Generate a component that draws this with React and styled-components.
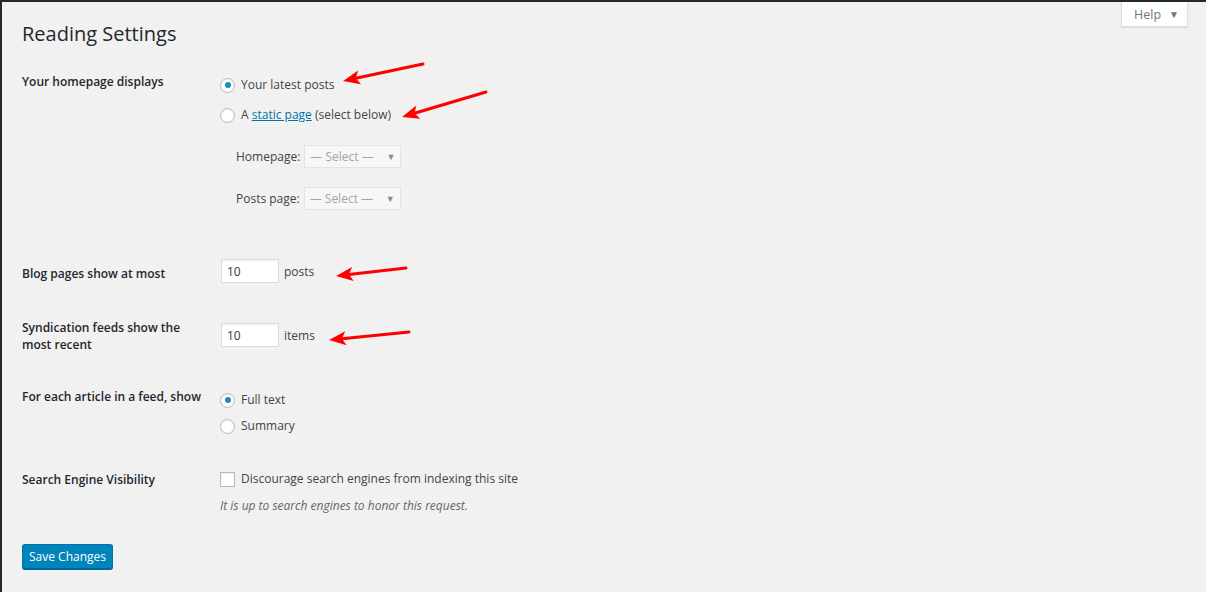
import React from "react";
import styled, { createGlobalStyle } from "styled-components";

const GlobalStyle = createGlobalStyle`
  html, body { margin: 0; padding: 0; background: #f1f1f1; }
  body {
    font-family: "Open Sans", "Noto Sans", sans-serif;
    color: #444;
    font-size: 12px;
  }
  * { box-sizing: border-box; }
`;

const Frame = styled.div`
  position: relative;
  min-height: 592px;
  background: #f1f1f1;
  border-top: 2px solid #23282d;
  border-left: 2px solid #23282d;
  padding: 0 18px 0 20px;
  overflow: hidden;
`;

const MenuMark = styled.span`
  position: absolute;
  left: -2px;
  top: ${(p) => p.$top}px;
  width: 2px;
  height: ${(p) => p.$h}px;
  background: #0073aa;
`;

const HelpTab = styled.button`
  float: right;
  width: 67px;
  height: 25px;
  margin: 0;
  padding: 0 0 0 4px;
  background: #fff;
  border: 1px solid #ddd;
  border-top: none;
  box-shadow: 0 1px 1px rgba(0, 0, 0, 0.08);
  font-family: inherit;
  font-size: 12.5px;
  color: #72777c;
  display: flex;
  align-items: center;
  justify-content: center;
  gap: 8px;
`;

const Caret = styled.span`
  font-size: 10px;
  color: #72777c;
  margin-top: -1px;
`;

const Title = styled.h1`
  margin: 0;
  padding-top: 17px;
  font-size: 20px;
  line-height: 29px;
  font-weight: 400;
  color: #23282d;
`;

const Row = styled.div`
  display: flex;
  margin-top: ${(p) => p.$mt}px;
`;

const Th = styled.div`
  flex: none;
  width: 198px;
  padding-top: ${(p) => p.$pt || 0}px;
  padding-right: 10px;
  font-size: 12px;
  line-height: 17px;
  font-weight: 600;
  color: #23282d;
`;

const Td = styled.div`
  flex: 1;
  padding-top: ${(p) => p.$pt || 0}px;
  display: flex;
  flex-direction: column;
`;

const ChoiceLine = styled.label`
  display: flex;
  align-items: center;
  gap: 6px;
  height: 20px;
  line-height: 20px;
  font-size: 12px;
  color: #444;
  margin-top: ${(p) => p.$mt || 0}px;
`;

const Radio = styled.span`
  flex: none;
  width: 15px;
  height: 15px;
  border-radius: 50%;
  border: 1px solid #b4b9be;
  background: #fff;
  box-shadow: inset 0 1px 2px rgba(0, 0, 0, 0.07);
  display: flex;
  align-items: center;
  justify-content: center;
  &::after {
    content: "";
    width: 6px;
    height: 6px;
    border-radius: 50%;
    background: #1e8cbe;
    display: ${(p) => (p.$checked ? "block" : "none")};
  }
`;

const Checkbox = styled.span`
  flex: none;
  width: 15px;
  height: 15px;
  border: 1px solid #b4b9be;
  background: #fff;
  box-shadow: inset 0 1px 2px rgba(0, 0, 0, 0.07);
`;

const Link = styled.a`
  color: #0073aa;
  text-decoration: underline;
`;

const SubField = styled.div`
  display: flex;
  align-items: center;
  gap: 4px;
  height: 23px;
  padding-left: 16px;
  margin-top: ${(p) => p.$mt}px;
  font-size: 12px;
  color: #444;
`;

const FakeSelect = styled.div`
  width: 97px;
  height: 23px;
  border: 1px solid #e2e4e7;
  background: #f7f7f7;
  color: #a0a5aa;
  font-size: 12px;
  display: flex;
  align-items: center;
  justify-content: space-between;
  padding: 0 5px 0 5px;
`;

const SelectCaret = styled.span`
  font-size: 9px;
  color: #8a8a8a;
`;

const InputLine = styled.div`
  display: flex;
  align-items: center;
  gap: 5px;
  font-size: 12px;
  color: #444;
`;

const NumberBox = styled.div`
  width: 58px;
  height: 24px;
  margin-left: 1px;
  border: 1px solid #ddd;
  background: #fff;
  box-shadow: inset 0 1px 2px rgba(0, 0, 0, 0.07);
  padding-left: 5px;
  display: flex;
  align-items: center;
  font-size: 12px;
  color: #32373c;
`;

const Description = styled.p`
  margin: 7px 0 0;
  line-height: 20px;
  font-size: 12px;
  font-style: italic;
  color: #666;
`;

const SaveButton = styled.button`
  display: block;
  margin-top: 28px;
  height: 25px;
  padding: 0 6px;
  white-space: nowrap;
  font-family: inherit;
  font-size: 12px;
  color: #fff;
  background: #0085ba;
  border: 1px solid #0073aa;
  border-bottom-color: #006799;
  border-radius: 3px;
  box-shadow: 0 1px 0 #006799;
`;

const ArrowLayer = styled.svg`
  position: absolute;
  left: -2px;
  top: -2px;
  pointer-events: none;
`;

const arrows = [
  [423, 64, 343, 81],
  [486, 92, 402, 117],
  [406, 268, 336, 276],
  [409, 332, 329, 340],
];

function Arrow({ x1, y1, x2, y2 }) {
  const dx = x2 - x1;
  const dy = y2 - y1;
  const len = Math.hypot(dx, dy);
  const ux = dx / len;
  const uy = dy / len;
  const hl = 17;
  const hw = 7;
  const bx = x2 - ux * hl;
  const by = y2 - uy * hl;
  const nx = -uy;
  const ny = ux;
  const nbx = x2 - ux * (hl - 4);
  const nby = y2 - uy * (hl - 4);
  const pts = [
    [x2, y2],
    [bx + nx * hw, by + ny * hw],
    [nbx, nby],
    [bx - nx * hw, by - ny * hw],
  ]
    .map((p) => p.join(","))
    .join(" ");
  return (
    <g>
      <line x1={x1} y1={y1} x2={nbx} y2={nby} stroke="#f00" strokeWidth="3" strokeLinecap="round" />
      <polygon points={pts} fill="#f00" />
    </g>
  );
}

export default function App() {
  return (
    <>
      <GlobalStyle />
      <Frame>
        <MenuMark $top={377} $h={11} />
        <MenuMark $top={397} $h={12} />
        <HelpTab>
          Help <Caret>▼</Caret>
        </HelpTab>
        <Title>Reading Settings</Title>

        <Row $mt={25}>
          <Th>Your homepage displays</Th>
          <Td $pt={2}>
            <ChoiceLine>
              <Radio $checked /> Your latest posts
            </ChoiceLine>
            <ChoiceLine $mt={10}>
              <Radio />
              <span>
                A <Link>static page</Link> (select below)
              </span>
            </ChoiceLine>
            <SubField $mt={20}>
              Homepage: <FakeSelect>— Select — <SelectCaret>▼</SelectCaret></FakeSelect>
            </SubField>
            <SubField $mt={19}>
              Posts page: <FakeSelect>— Select — <SelectCaret>▼</SelectCaret></FakeSelect>
            </SubField>
          </Td>
        </Row>

        <Row $mt={49}>
          <Th $pt={6}>Blog pages show at most</Th>
          <Td>
            <InputLine>
              <NumberBox>10</NumberBox> posts
            </InputLine>
          </Td>
        </Row>

        <Row $mt={36}>
          <Th>Syndication feeds show the most recent</Th>
          <Td $pt={4}>
            <InputLine>
              <NumberBox>10</NumberBox> items
            </InputLine>
          </Td>
        </Row>

        <Row $mt={35}>
          <Th>For each article in a feed, show</Th>
          <Td $pt={2}>
            <ChoiceLine>
              <Radio $checked /> Full text
            </ChoiceLine>
            <ChoiceLine $mt={6}>
              <Radio /> Summary
            </ChoiceLine>
          </Td>
        </Row>

        <Row $mt={33}>
          <Th $pt={2}>Search Engine Visibility</Th>
          <Td>
            <ChoiceLine>
              <Checkbox /> Discourage search engines from indexing this site
            </ChoiceLine>
            <Description>It is up to search engines to honor this request.</Description>
          </Td>
        </Row>

        <SaveButton>Save Changes</SaveButton>

        <ArrowLayer width="1206" height="592" viewBox="0 0 1206 592">
          {arrows.map(([a, b, c, d], i) => (
            <Arrow key={i} x1={a} y1={b} x2={c} y2={d} />
          ))}
        </ArrowLayer>
      </Frame>
    </>
  );
}
